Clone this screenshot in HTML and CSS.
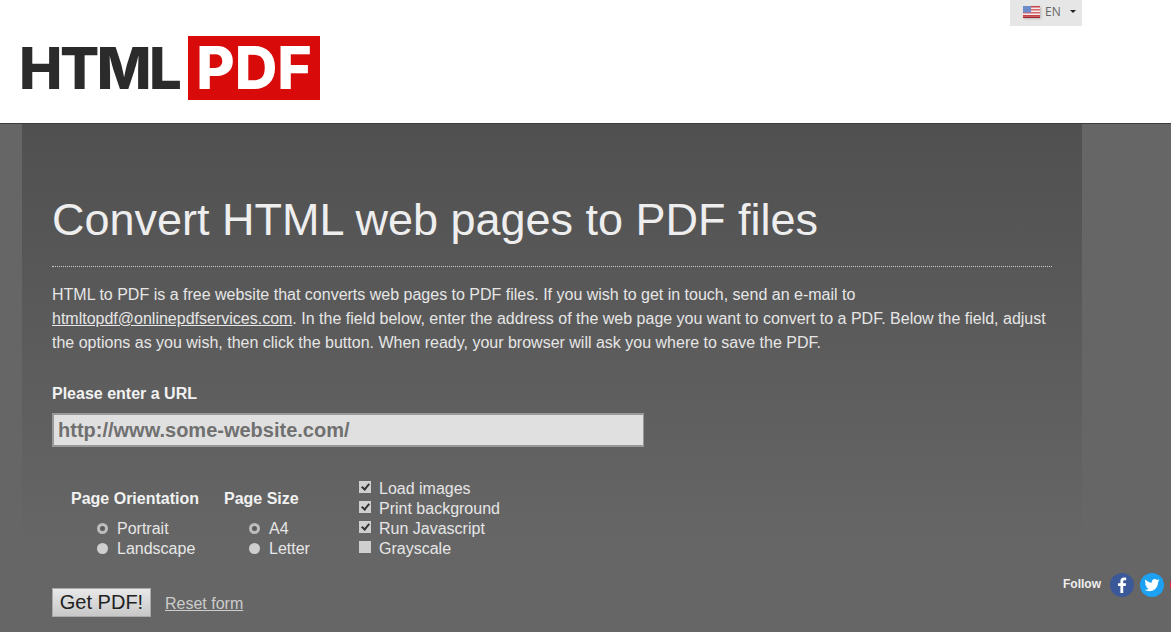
FILE: index.html
```html
<!DOCTYPE html>
<html lang="en">
<head>
    <meta charset="UTF-8">
    <meta name="viewport" content="width=device-width, initial-scale=1.0">
    <title>HTML to PDF</title>
    <link rel="stylesheet" href="styles.css">
</head>
<body>
    <!-- Header -->
    <div class="header">
        <div class="logo">
            <span class="logo-html">HTML</span>
            <span class="logo-pdf">PDF</span>
        </div>
        <div class="lang">
            <svg class="flag" width="17" height="12" viewBox="0 0 17 12">
                <rect width="17" height="12" fill="#f3eaea"/>
                <rect y="0" width="17" height="1.5" fill="#c8434a"/>
                <rect y="3" width="17" height="1.5" fill="#d4666c"/>
                <rect y="6" width="17" height="1.5" fill="#d4666c"/>
                <rect y="9" width="17" height="1.5" fill="#c8434a"/>
                <rect y="10.5" width="17" height="1.5" fill="#a8242c"/>
                <rect width="8" height="6.5" fill="#6d8cc9"/>
            </svg>
            <span class="lang-name">EN</span>
            <span class="caret"></span>
        </div>
    </div>

    <!-- Main panel -->
    <div class="panel">
        <h1>Convert HTML web pages to PDF files</h1>
        <p class="intro">HTML to PDF is a free website that converts web pages to PDF files. If you wish to get in touch, send an e-mail to <a href="#">htmltopdf@onlinepdfservices.com</a>. In the field below, enter the address of the web page you want to convert to a PDF. Below the field, adjust the options as you wish, then click the button. When ready, your browser will ask you where to save the PDF.</p>

        <form>
            <label class="url-label" for="url">Please enter a URL</label>
            <input class="url-input" type="text" id="url" placeholder="http://www.some-website.com/">

            <div class="options">
                <div class="option-group orientation">
                    <div class="group-title">Page Orientation</div>
                    <label class="radio-row"><input type="radio" name="orientation" checked>Portrait</label>
                    <label class="radio-row"><input type="radio" name="orientation">Landscape</label>
                </div>
                <div class="option-group size">
                    <div class="group-title">Page Size</div>
                    <label class="radio-row"><input type="radio" name="size" checked>A4</label>
                    <label class="radio-row"><input type="radio" name="size">Letter</label>
                </div>
                <div class="checks">
                    <label class="check-row"><input type="checkbox" checked>Load images</label>
                    <label class="check-row"><input type="checkbox" checked>Print background</label>
                    <label class="check-row"><input type="checkbox" checked>Run Javascript</label>
                    <label class="check-row"><input type="checkbox">Grayscale</label>
                </div>
            </div>

            <div class="actions">
                <button type="button">Get PDF!</button>
                <a class="reset" href="#">Reset form</a>
            </div>
        </form>
    </div>

    <!-- Social buttons float over the page -->
    <div class="follow">
        <span>Follow</span>
        <svg width="24" height="24" viewBox="0 0 24 24">
            <circle cx="12" cy="12" r="12" fill="#3b5998"/>
            <path d="M13.2 20v-7h2.5l.4-2.8h-2.9V8.5c0-.8.3-1.3 1.4-1.3h1.600V4.700c-.3 0-1.200-.1-2.200-.1-2.200 0-3.600 1.300-3.600 3.700v1.900H8v2.800h2.400v7z" fill="#fff"/>
        </svg>
        <svg width="24" height="24" viewBox="0 0 24 24">
            <circle cx="12" cy="12" r="12" fill="#1da1f2"/>
            <path d="M19.500 7.300c-.6.300-1.200.4-1.800.5.600-.4 1.100-1 1.400-1.700-.6.400-1.300.6-2 .8-.6-.6-1.400-1-2.300-1-1.700 0-3.100 1.400-3.100 3.100 0 .2 0 .5.100.7-2.600-.1-4.900-1.400-6.400-3.300-.3.500-.4 1-.4 1.600 0 1.100.6 2 1.400 2.600-.5 0-1-.2-1.400-.4 0 1.500 1.100 2.800 2.500 3.100-.5.100-.9.100-1.400.1.400 1.200 1.500 2.100 2.900 2.100-1.100.8-2.400 1.300-3.900 1.300h-.7c1.400.9 3 1.400 4.800 1.400 5.700 0 8.800-4.700 8.800-8.800v-.4c.6-.4 1.100-1 1.500-1.700z" fill="#fff"/>
        </svg>
        <svg width="24" height="24" viewBox="0 0 24 24">
            <circle cx="12" cy="12" r="12" fill="#dd2a3a"/>
        </svg>
    </div>
</body>
</html>
```

FILE: styles.css
```css
html, body {
    height: 100%;
}

body {
    font-family: "Liberation Sans", Arial, sans-serif;
    margin: 0;
    padding: 0;
    background-color: #666;
    overflow: hidden;
}

.header {
    position: relative;
    height: 123px;
    background-color: #fff;
    border-bottom: 1px solid #3c3c3c;
}

.logo {
    display: flex;
    align-items: center;
    padding: 36px 0 0 19px;
}

.logo-html {
    font-family: Inter, "Liberation Sans", sans-serif;
    font-weight: 800;
    font-size: 58px;
    letter-spacing: -2.5px;
    line-height: 64px;
    width: 169px;
    color: #2b2b2b;
}

.logo-pdf {
    font-family: Inter, "Liberation Sans", sans-serif;
    font-weight: 800;
    font-size: 59px;
    line-height: 64px;
    width: 132px;
    height: 64px;
    text-align: center;
    color: #fff;
    background-color: #d90a0a;
}

.lang {
    position: absolute;
    top: 0;
    left: 1010px;
    width: 72px;
    height: 26px;
    display: flex;
    align-items: center;
    background-color: #e6e6e6;
    font-family: "Open Sans", sans-serif;
    font-size: 12px;
    color: #666;
}

.flag {
    margin-left: 13px;
    margin-bottom: 3px;
    box-shadow: 1px 1px 2px #bbb;
}

.lang-name {
    margin-left: 5px;
    margin-bottom: 3px;
}

.caret {
    margin-left: 9px;
    margin-bottom: 4px;
    border-top: 3px solid #222;
    border-left: 3px solid transparent;
    border-right: 3px solid transparent;
}

.panel {
    width: 1000px;
    height: 508px;
    margin-left: 22px;
    padding: 0 30px;
    background: linear-gradient(to bottom, #505050, #666) no-repeat;
    background-size: 100% 420px;
}

h1 {
    margin: 0;
    padding: 69px 0 19px;
    font-size: 45px;
    line-height: 54px;
    font-weight: normal;
    color: #eee;
    border-bottom: 1px dotted #ccc;
}

.intro {
    margin: 16px 0 0;
    font-size: 16px;
    line-height: 24px;
    color: #e6e6e6;
}

.intro a {
    color: #e6e6e6;
}

.url-label {
    display: block;
    margin-top: 27px;
    font-size: 16px;
    line-height: 24px;
    font-weight: bold;
    color: #f2f2f2;
}

.url-input {
    display: block;
    box-sizing: border-box;
    width: 592px;
    height: 34px;
    margin-top: 7px;
    padding: 0 4px;
    border: 2px solid #999;
    border-right-width: 1px;
    background-color: #e0e0e0;
    font-family: "Liberation Sans", Arial, sans-serif;
    font-size: 20px;
    font-weight: bold;
    color: #707070;
}

.url-input::placeholder {
    color: #707070;
    opacity: 1;
}

.options {
    display: flex;
    margin-top: 32px;
    font-size: 16px;
    line-height: 20px;
    color: #e6e6e6;
}

.option-group {
    padding-top: 10px;
}

.orientation {
    margin-left: 19px;
    width: 153px;
}

.size {
    width: 135px;
}

.group-title {
    font-weight: bold;
    color: #f2f2f2;
    margin-bottom: 10px;
}

.radio-row, .check-row {
    display: flex;
    align-items: center;
    height: 20px;
}

.orientation .radio-row {
    padding-left: 26px;
}

.size .radio-row {
    padding-left: 25px;
}

input[type="radio"], input[type="checkbox"] {
    appearance: none;
    box-sizing: border-box;
    margin: 0 8px 0 0;
    width: 12px;
    height: 12px;
    background-color: #cfcfcf;
    flex-shrink: 0;
}

input[type="radio"] {
    width: 11px;
    height: 11px;
    margin-right: 9px;
    border-radius: 50%;
    margin-top: -2px;
}

input[type="radio"]:checked {
    background-color: #5c5c5c;
    border: 3px solid #bdbdbd;
}

input[type="checkbox"] {
    position: relative;
    margin-top: -4px;
}

input[type="checkbox"]:checked::after {
    content: "";
    position: absolute;
    left: 4px;
    top: 1px;
    width: 3px;
    height: 6px;
    border: solid #333;
    border-width: 0 2px 2px 0;
    transform: rotate(40deg);
}

.actions {
    display: flex;
    align-items: center;
    margin-top: 29px;
}

button {
    box-sizing: border-box;
    width: 99px;
    height: 29px;
    padding: 0;
    border: 1px solid #aaa;
    background: linear-gradient(to bottom, #e8e8e8, #c8c8c8);
    font-family: "Liberation Sans", Arial, sans-serif;
    font-size: 20px;
    color: #222;
}

.reset {
    margin-left: 14px;
    margin-top: 2px;
    font-size: 16px;
    color: #ccc;
}

.follow {
    position: absolute;
    top: 573px;
    left: 1063px;
    display: flex;
    align-items: center;
    gap: 6px;
    font-size: 12px;
    font-weight: bold;
    color: #eee;
}

.follow span {
    margin-right: 3px;
    margin-top: -2px;
}
```
